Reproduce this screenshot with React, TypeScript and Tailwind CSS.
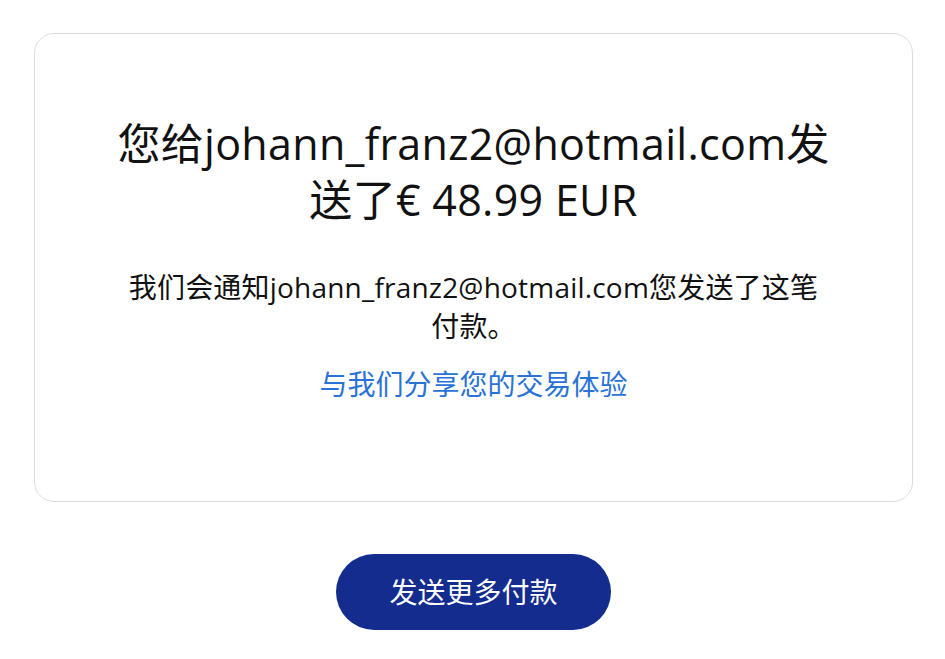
import React from "react";

const font = { fontFamily: '"Open Sans", "Noto Sans CJK SC", sans-serif' };

export default function App() {
    const email = "johann_franz2@hotmail.com";

    return (
        <div className="min-h-[659px] w-full bg-white pl-[34px] pr-[32px] pt-[33px]" style={font}>
            {/* Confirmation card */}
            <div className="flex h-[469px] flex-col items-center rounded-[20px] border border-[#dcdcdc] bg-white px-[50px] pt-[82px]">
                <h1 className="text-center text-[43px] leading-[56px] font-normal tracking-[0.3px] text-[#111]">
                    您给{email}发
                    <br />
                    送了€ 48.99 EUR
                </h1>
                <p className="mt-[40px] text-center text-[28px] leading-[39px] tracking-[0.2px] text-[#111]">
                    我们会通知{email}您发送了这笔
                    <br />
                    付款。
                </p>
                <a href="#" className="mt-[19px] text-[28px] leading-[39px] text-[#2a72d6]">
                    与我们分享您的交易体验
                </a>
            </div>

            {/* Action */}
            <div className="flex justify-center pt-[52px]">
                <button className="h-[76px] w-[275px] rounded-full bg-[#142c8e] text-[28px] font-normal text-white">
                    发送更多付款
                </button>
            </div>
        </div>
    );
}
